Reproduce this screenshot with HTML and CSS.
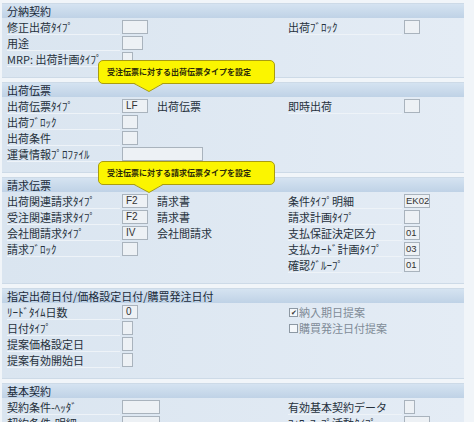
FILE: index.html
```html
<!DOCTYPE html>
<html lang="ja">
<head>
    <meta charset="UTF-8">
    <meta name="viewport" content="width=device-width, initial-scale=1.0">
    <title>受注伝票タイプ設定</title>
    <link rel="stylesheet" href="styles.css">
</head>
<body>
    <div class="screen">
        <div class="group g-delivsched">
            <div class="group-title">分納契約</div>
            <div class="group-body">
                <div class="col-left">
                    <div class="row"><span class="lbl">修正出荷ﾀｲﾌﾟ</span><span class="fld w4"></span></div>
                    <div class="row"><span class="lbl">用途</span><span class="fld w3"></span></div>
                    <div class="row"><span class="lbl">MRP: 出荷計画ﾀｲﾌﾟ</span><span class="fld w1"></span></div>
                </div>
                <div class="col-right">
                    <div class="row"><span class="lbl">出荷ﾌﾞﾛｯｸ</span><span class="fld w2"></span></div>
                </div>
            </div>
        </div>

        <div class="group">
            <div class="group-title">出荷伝票</div>
            <div class="group-body">
                <div class="col-left">
                    <div class="row"><span class="lbl">出荷伝票ﾀｲﾌﾟ</span><span class="fld w4">LF</span><span class="val">出荷伝票</span></div>
                    <div class="row"><span class="lbl">出荷ﾌﾞﾛｯｸ</span><span class="fld w2"></span></div>
                    <div class="row"><span class="lbl">出荷条件</span><span class="fld w2"></span></div>
                    <div class="row"><span class="lbl">運賃情報ﾌﾟﾛﾌｧｲﾙ</span><span class="fld w10"></span></div>
                </div>
                <div class="col-right">
                    <div class="row"><span class="lbl">即時出荷</span><span class="fld w2"></span></div>
                </div>
            </div>
        </div>

        <div class="group">
            <div class="group-title">請求伝票</div>
            <div class="group-body">
                <div class="col-left">
                    <div class="row"><span class="lbl">出荷関連請求ﾀｲﾌﾟ</span><span class="fld w4">F2</span><span class="val">請求書</span></div>
                    <div class="row"><span class="lbl">受注関連請求ﾀｲﾌﾟ</span><span class="fld w4">F2</span><span class="val">請求書</span></div>
                    <div class="row"><span class="lbl">会社間請求ﾀｲﾌﾟ</span><span class="fld w4">IV</span><span class="val">会社間請求</span></div>
                    <div class="row"><span class="lbl">請求ﾌﾞﾛｯｸ</span><span class="fld w2"></span></div>
                </div>
                <div class="col-right">
                    <div class="row"><span class="lbl">条件ﾀｲﾌﾟ明細</span><span class="fld w4 tight">EK02</span></div>
                    <div class="row"><span class="lbl">請求計画ﾀｲﾌﾟ</span><span class="fld w2"></span></div>
                    <div class="row"><span class="lbl">支払保証決定区分</span><span class="fld w2 tight">01</span></div>
                    <div class="row"><span class="lbl">支払カｰﾄﾞ計画ﾀｲﾌﾟ</span><span class="fld w2 tight">03</span></div>
                    <div class="row"><span class="lbl">確認ｸﾞﾙｰﾌﾟ</span><span class="fld w2 tight">01</span></div>
                </div>
            </div>
        </div>

        <div class="group">
            <div class="group-title">指定出荷日付/価格設定日付/購買発注日付</div>
            <div class="group-body">
                <div class="col-left">
                    <div class="row"><span class="lbl">ﾘｰﾄﾞﾀｲﾑ日数</span><span class="fld w2">0</span></div>
                    <div class="row"><span class="lbl">日付ﾀｲﾌﾟ</span><span class="fld w1"></span></div>
                    <div class="row"><span class="lbl">提案価格設定日</span><span class="fld w1"></span></div>
                    <div class="row"><span class="lbl">提案有効開始日</span><span class="fld w1"></span></div>
                </div>
                <div class="col-right">
                    <div class="row check"><span class="box on">&#10004;</span>納入期日提案</div>
                    <div class="row check"><span class="box"></span>購買発注日付提案</div>
                </div>
            </div>
        </div>

        <div class="group">
            <div class="group-title">基本契約</div>
            <div class="group-body">
                <div class="col-left">
                    <div class="row"><span class="lbl">契約条件-ﾍｯﾀﾞ</span><span class="fld w5"></span></div>
                    <div class="row"><span class="lbl">契約条件-明細</span><span class="fld w5"></span></div>
                </div>
                <div class="col-right">
                    <div class="row"><span class="lbl">有効基本契約データ</span><span class="fld w1"></span></div>
                    <div class="row"><span class="lbl">ﾌｫﾛｰｱｯﾌﾟ活動ﾀｲﾌﾟ</span><span class="fld w4"></span></div>
                </div>
            </div>
        </div>

        <div class="tip tip-deliv">受注伝票に対する出荷伝票タイプを設定
            <svg class="tail" width="30" height="10" viewBox="0 0 30 10"><polygon points="0,0 15,8.5 29,0" fill="#fbf500"/><polyline points="0,0.5 15,8.5 29,0.5" fill="none" stroke="#a99c10" stroke-width="1"/></svg>
        </div>
        <div class="tip tip-bill">受注伝票に対する請求伝票タイプを設定
            <svg class="tail" width="30" height="10" viewBox="0 0 30 10"><polygon points="0,0 15,8.5 29,0" fill="#fbf500"/><polyline points="0,0.5 15,8.5 29,0.5" fill="none" stroke="#a99c10" stroke-width="1"/></svg>
        </div>
    </div>
</body>
</html>
```

FILE: styles.css
```css
body {
    margin: 0;
    background-color: #f1f5f9;
    font-family: "Noto Sans CJK JP", "Noto Sans", sans-serif;
    font-size: 11px;
    color: #26313c;
}
.screen {
    position: relative;
    width: 462px;
    height: 418px;
    overflow: hidden;
    margin-left: 2px;
    padding-top: 4px;
}
.group {
    margin-bottom: 6px;
    background: linear-gradient(to right, #dae5f0, #e4ecf5);
    box-shadow: 0 0 0 1px #cddae7;
}
.group-title {
    height: 14px;
    line-height: 14px;
    padding-left: 5px;
    background: linear-gradient(#d5e3f1, #bfd2e6);
    color: #1a2a3a;
}
.group-body {
    display: flex;
    padding: 1px 0 10px 5px;
}
.col-left {
    width: 281px;
}
.col-right {
    flex: 1;
}
.row {
    display: flex;
    align-items: center;
    height: 16px;
}
.lbl {
    width: 113px;
    margin-right: 2px;
    height: 14px;
    line-height: 14px;
    border-bottom: 1px solid #eef3f8;
    white-space: nowrap;
}
.col-right .lbl {
    width: 114px;
}
.fld {
    box-sizing: border-box;
    height: 14px;
    border: 1px solid #a9b3bd;
    background-color: #edf1f5;
    font-family: "Liberation Sans", sans-serif;
    font-size: 10px;
    line-height: 12px;
    padding-left: 3px;
    color: #333;
    white-space: nowrap;
    overflow: hidden;
}
.fld.tight {
    padding-left: 1px;
    font-size: 9.5px;
}
.w1 { width: 11px; }
.w2 { width: 16px; }
.w3 { width: 21px; }
.w4 { width: 26px; }
.w5 { width: 38px; }
.w10 { width: 81px; }
.val {
    margin-left: 9px;
}
.row.check {
    color: #7f8b97;
}
.box {
    box-sizing: border-box;
    width: 9px;
    height: 9px;
    margin: 0 1px 0 1px;
    border: 1px solid #8d98a3;
    background-color: #f4f7fa;
    font-size: 7px;
    line-height: 7px;
    text-align: center;
    color: #333;
}

/* quick info bubbles */
.tip {
    position: absolute;
    left: 96px;
    width: 177px;
    height: 24px;
    box-sizing: border-box;
    border: 1px solid #a99c10;
    border-radius: 5px;
    background-color: #fbf500;
    padding-left: 8px;
    font-size: 8px;
    font-weight: bold;
    line-height: 22px;
    color: #2d2a08;
}
.tip-deliv { top: 60px; }
.tip-bill { top: 161px; }
.tail {
    position: absolute;
    left: 35px;
    top: 22px;
}
```
